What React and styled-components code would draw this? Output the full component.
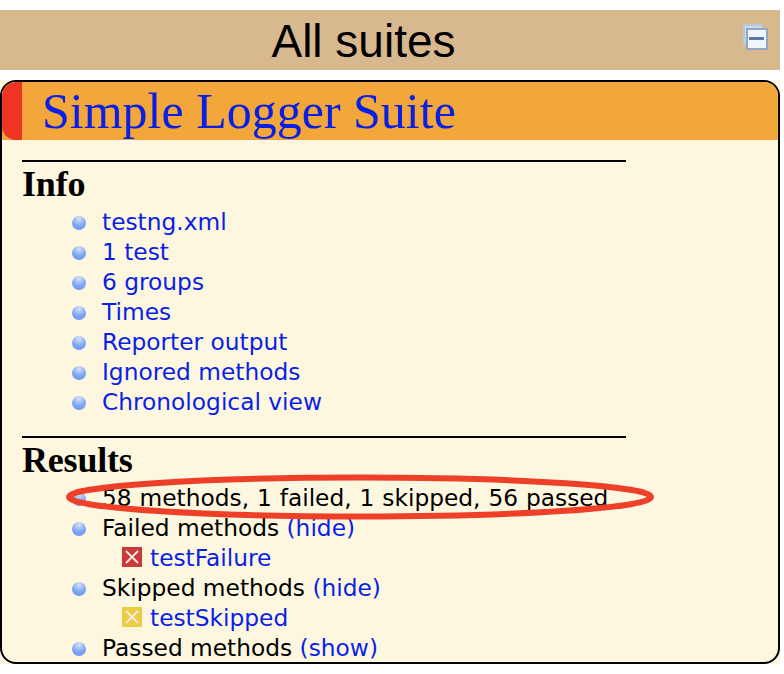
import React from 'react';
import styled, { createGlobalStyle } from 'styled-components';

const GlobalStyle = createGlobalStyle`
	html, body {
		margin: 0;
		padding: 0;
		background: #fff;
	}
	a {
		color: #0a1fe6;
		text-decoration: none;
	}
`;

const infoLinks = ['testng.xml', '1 test', '6 groups', 'Times', 'Reporter output', 'Ignored methods', 'Chronological view'];

function CollapseIcon() {
	return (
		<IconWrap width="25" height="26" viewBox="0 0 25 26">
			<rect x="1" y="1" width="18" height="19" fill="#c9dcee" stroke="#b4cbe0" strokeWidth="2" />
			<rect x="4" y="5" width="20" height="20" fill="#eef5fb" stroke="#93a6bd" strokeWidth="2" />
			<rect x="6" y="13" width="15" height="3" fill="#557aa8" />
		</IconWrap>
	);
}

function CrossIcon({ color }) {
	return (
		<StatusIcon width="20" height="20" viewBox="0 0 20 20">
			<rect width="20" height="20" fill={color} />
			<path d="M4 4 L16 16 M16 4 L4 16" stroke="#f8ece0" strokeWidth="1.8" />
		</StatusIcon>
	);
}

export default function App() {
	return (
		<>
			<GlobalStyle />
			<Page>
				<TopBar>
					<TopTitle>All suites</TopTitle>
					<CollapseIcon />
				</TopBar>
				<Corners>
					<Suite>
						<SuiteHeader>
							<Stripe />
							<SuiteTitle href="#">Simple Logger Suite</SuiteTitle>
						</SuiteHeader>
						<Body>
							<Section>
								<Rule />
								<Heading>Info</Heading>
								<List>
									{infoLinks.map((item) => (
										<Item key={item}><a href="#">{item}</a></Item>
									))}
								</List>
							</Section>
							<Section>
								<Rule />
								<Heading>Results</Heading>
								<List>
									<StatsItem>58 methods, 1 failed, 1 skipped, 56 passed</StatsItem>
									<Item>Failed methods <a href="#">(hide)</a></Item>
									<SubItem><CrossIcon color="#c93b3b" /><a href="#">testFailure</a></SubItem>
									<Item>Skipped methods <a href="#">(hide)</a></Item>
									<SubItem><CrossIcon color="#eccb45" /><a href="#">testSkipped</a></SubItem>
									<Item>Passed methods <a href="#">(show)</a></Item>
								</List>
							</Section>
						</Body>
					</Suite>
				</Corners>
				<Oval width="600" height="60" viewBox="0 0 600 60">
					<ellipse cx="295" cy="26" rx="291" ry="19.5" fill="none" stroke="#ee4028" strokeWidth="6" />
				</Oval>
			</Page>
		</>
	);
}

const Page = styled.div`
	position: relative;
	width: 780px;
	padding-top: 10px;
	font-family: "DejaVu Sans", sans-serif;
`;

const TopBar = styled.div`
	height: 60px;
	padding: 0 12px 0 0;
	background-color: #d8b88f;
	display: flex;
	align-items: center;
`;

const TopTitle = styled.div`
	flex: 1;
	padding-top: 2px;
	padding-right: 16px;
	text-align: center;
	font-family: "Liberation Sans", sans-serif;
	font-size: 46px;
	color: #000;
`;

const IconWrap = styled.svg`
	display: block;
	margin-top: -6px;
`;

const Corners = styled.div`
	margin-top: 10px;
	background-color: #fef7df;
`;

const Suite = styled.div`
	height: 584px;
	box-sizing: border-box;
	border: 2px solid #000;
	border-radius: 16px;
	background-color: #fef7df;
	overflow: hidden;
`;

const SuiteHeader = styled.div`
	height: 58px;
	background-color: #f3a73b;
	display: flex;
	align-items: center;
`;

const Stripe = styled.div`
	width: 20px;
	height: 100%;
	background-color: #ee3524;
	border-radius: 14px 0 0 14px;
`;

const SuiteTitle = styled.a`
	margin-left: 20px;
	font-family: "Liberation Serif", serif;
	font-size: 50px;
`;

const Body = styled.div`
	padding: 20px 0 0 20px;
	display: flex;
	flex-direction: column;
	gap: 19px;
`;

const Section = styled.div`
	width: 604px;
`;

const Rule = styled.div`
	height: 2px;
	background-color: #000;
`;

const Heading = styled.div`
	margin-top: 1px;
	font-family: "Liberation Serif", serif;
	font-size: 36px;
	font-weight: bold;
	line-height: 43px;
	letter-spacing: -0.2px;
	color: #000;
`;

const List = styled.ul`
	list-style: none;
	margin: 0;
	padding: 1px 0 0;
	width: 700px;
`;

const Item = styled.li`
	position: relative;
	height: 30px;
	padding-left: 80px;
	font-size: 23.3px;
	line-height: 30px;
	white-space: nowrap;
	color: #000;

	&::before {
		content: '';
		position: absolute;
		left: 50px;
		top: 9px;
		width: 14px;
		height: 14px;
		border-radius: 50%;
		background: radial-gradient(circle at 50% 20%, #d6e3fb 0%, #84aaf6 50%, #5f90f5 100%);
	}
`;

const StatsItem = styled(Item)`
	word-spacing: 0.5px;
`;

const SubItem = styled.li`
	height: 30px;
	padding-left: 100px;
	font-size: 23.3px;
	line-height: 30px;
	white-space: nowrap;
	display: flex;
	align-items: center;
	gap: 8px;
`;

const StatusIcon = styled.svg`
	display: block;
	flex-shrink: 0;
	margin-top: -2px;
`;

const Oval = styled.svg`
	position: absolute;
	left: 65px;
	top: 471px;
`;
